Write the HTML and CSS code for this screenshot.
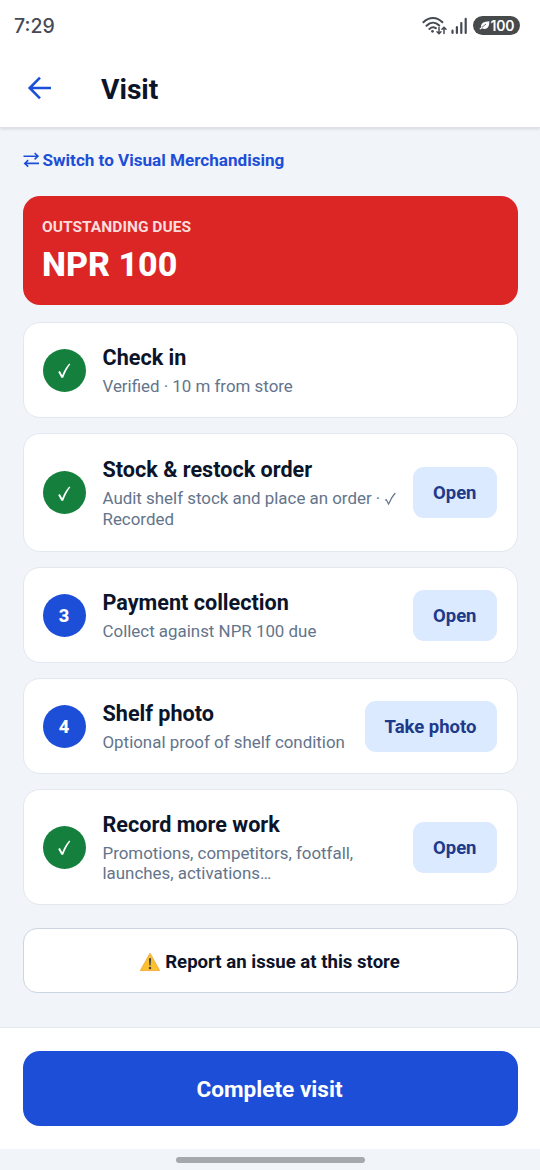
FILE: index.html
```html
<!DOCTYPE html>
<html lang="en">
<head>
<meta charset="utf-8">
<title>Visit</title>
<link rel="stylesheet" href="styles.css">
</head>
<body>
<svg class="defs" width="0" height="0">
  <symbol id="check" viewBox="0 0 14 16"><path d="M1.2 9 2.9 8.100 5.200 12.200C7 8 9.100 4.200 12.200.6L13.300 1.200C10.300 5 8.100 9.500 6.200 14.700H4.400Z" fill="currentColor"/></symbol>
</svg>
<div class="screen">
  <div class="status">
    <span class="time">7:29</span>
    <div class="status-icons">
      <svg class="wifi" width="26" height="20" viewBox="0 0 26 20" fill="none" stroke="#474a55" stroke-width="2" stroke-linecap="round">
        <path d="M1.400 6.300C7 .5 15 .5 20.400 6.300M4.500 9.800C8.500 5.800 13.500 5.800 17.200 9.500M7.400 12.900C9.500 11 12 11 13.800 12.200"/>
        <circle cx="10.500" cy="15.300" r="1.400" fill="#474a55" stroke="none"/>
        <path d="M17 11.500V17.500M15 15.700 17 17.700 19 15.700M22 17.500V11.500M20 13.300 22 11.300 24 13.300" stroke-width="1.500"/>
      </svg>
      <svg class="signal" width="17" height="18" viewBox="0 0 17 18" stroke="#474a55" stroke-width="2.200" stroke-linecap="round"><path d="M1.500 13.700V15.900M5.900 10.200V15.900M10.300 6V15.900M14.700 1.900V15.900"/></svg>
      <div class="battery">
        <svg width="11" height="9" viewBox="0 0 11 9"><path d="M10.300.3C10.500 5.500 8.500 8 5.500 8 4.500 8 3.700 7.600 3.200 7.200L1.300 8.600.4 7.800 2.300 6.200C1.300 2.500 5 .4 10.300.3Z" fill="#fff"/><path d="M3 6.300 7 3" stroke="#464a4b" stroke-width=".8"/></svg>
        <span>100</span>
      </div>
    </div>
  </div>
  <header class="header">
    <svg class="back" width="24" height="24" viewBox="0 0 24 24" fill="none" stroke="#1d4ed8" stroke-width="2.600"><path d="M24 12H3.500M13 1.700 2.700 12 13 22.300"/></svg>
    <h1>Visit</h1>
  </header>
  <main class="content">
    <a class="switch"><svg width="16" height="16" viewBox="0 0 16 16" fill="none" stroke="currentColor" stroke-width="1.600"><path d="M.5 4.200H14.800M11.600 1 15 4.200 11.600 7.400M16 11.400H2M5.200 8.200 1.800 11.400 5.200 14.600"/></svg><span>Switch to Visual Merchandising</span></a>
    <section class="dues">
      <div class="dues-label">OUTSTANDING DUES</div>
      <div class="dues-amount">NPR 100</div>
    </section>
    <section class="card">
      <div class="badge done"><svg width="14" height="16"><use href="#check"/></svg></div>
      <div class="info"><h2>Check in</h2><p>Verified · 10 m from store</p></div>
    </section>
    <section class="card stock">
      <div class="badge done"><svg width="14" height="16"><use href="#check"/></svg></div>
      <div class="info"><h2>Stock &amp; restock order</h2><p>Audit shelf stock and place an order · <svg class="mini" width="12" height="14" viewBox="0 0 12 14" fill="none" stroke="currentColor"><path d="M1 8.300 2.300 7.700 4.600 12C6.300 8 8 4.500 11.300 1" stroke-width="1.200"/></svg><br>Recorded</p></div>
      <button class="action">Open</button>
    </section>
    <section class="card">
      <div class="badge">3</div>
      <div class="info"><h2>Payment collection</h2><p>Collect against NPR 100 due</p></div>
      <button class="action">Open</button>
    </section>
    <section class="card">
      <div class="badge">4</div>
      <div class="info"><h2>Shelf photo</h2><p>Optional proof of shelf condition</p></div>
      <button class="action">Take photo</button>
    </section>
    <section class="card more">
      <div class="badge done"><svg width="14" height="16"><use href="#check"/></svg></div>
      <div class="info"><h2>Record more work</h2><p>Promotions, competitors, footfall,<br>launches, activations…</p></div>
      <button class="action">Open</button>
    </section>
    <button class="report">
      <svg width="22" height="20" viewBox="0 0 22 20"><path d="M11 1.200 20.700 18.600H1.300Z" fill="#fcc02e" stroke="#f3b04a" stroke-width="1" stroke-linejoin="round"/><path d="M9.900 6.600Q11 5.400 12.100 6.600L11.600 13.400H10.400Z" fill="#38434a"/><circle cx="11" cy="16" r="1.250" fill="#38434a"/></svg>
      <span>Report an issue at this store</span>
    </button>
  </main>
  <footer class="footer"><button class="complete">Complete visit</button></footer>
  <div class="nav"><div class="handle"></div></div>
</div>
</body>
</html>
```

FILE: styles.css
```css
* { box-sizing: border-box; margin: 0; padding: 0; }
body { font-family: Roboto, sans-serif; background: #f1f4f9; color: #0b1429; }
button { font-family: inherit; border: 0; color: inherit; white-space: nowrap; }
svg { flex: none; display: block; }
.defs { position: absolute; }
.screen { width: 540px; height: 1170px; display: flex; flex-direction: column; overflow: hidden; }
.status { height: 50px; flex: none; background: #fff; display: flex; align-items: center; justify-content: space-between; padding: 1px 20px 0 14px; z-index: 2; }
.time { font: 500 19.500px/24px Inter, sans-serif; color: #474a55; }
.status-icons { display: flex; align-items: center; }
.signal { margin: 0 5px 0 3px; }
.battery { width: 47px; height: 19px; border-radius: 10px; background: #464a4b; color: #fff; display: flex; align-items: center; justify-content: center; gap: 1px; font: 600 14px/19px Inter, sans-serif; letter-spacing: -.2px; }
.header { height: 78px; flex: none; background: #fff; display: flex; align-items: center; padding: 0 0 1px 27px; border-bottom: 1px solid #dde1e7; box-shadow: 0 1px 3px rgba(15, 23, 42, .12); z-index: 1; }
.header h1 { font-size: 28.200px; line-height: 34px; font-weight: 700; margin: 4px 0 0 50px; }
.content { flex: 1; padding: 20px 22.500px 0; display: flex; flex-direction: column; }
.switch { height: 24px; display: flex; align-items: center; gap: 4px; color: #1d4ed8; font-size: 17.100px; font-weight: 700; }
.dues { margin-top: 24px; height: 109px; flex: none; background: #dc2626; border-radius: 17px; color: #fff; padding: 21px 19.500px 0; }
.dues-label { font-size: 15.550px; line-height: 21px; font-weight: 700; color: #fbdcdc; }
.dues-amount { font-size: 34px; line-height: 40px; font-weight: 800; margin-top: 6px; }
.card { margin-top: 15px; height: 96px; flex: none; background: #fff; border: 1.400px solid #e2e8f0; border-radius: 17px; display: flex; align-items: center; padding: 0 20px 0 19px; }
.dues + .card { margin-top: 17px; }
.card.stock { height: 119px; }
.card.more { height: 116px; }
.badge { width: 43px; height: 43px; flex: none; border-radius: 50%; background: #1d4ed8; color: #fff; font-size: 18.300px; font-weight: 800; display: flex; align-items: center; justify-content: center; }
.badge.done { background: #15803d; }
.badge svg { margin-top: 2px; }
.info { flex: 1; min-width: 0; margin-left: 17px; white-space: nowrap; }
.info h2 { font-size: 21.600px; line-height: 28px; font-weight: 700; }
.info p { font-size: 16.900px; line-height: 20px; margin-top: 4px; color: #64748b; }
.stock .info h2 { line-height: 27px; }
.stock .info p { line-height: 21px; margin-top: 5px; }
.stock .info { margin-top: 1px; }
.mini { display: inline-block; vertical-align: -2px; }
.action { height: 51px; flex: none; border-radius: 11px; background: #dbeafe; color: #1e3a8a; font-size: 18.500px; font-weight: 700; padding: 1px 20px 0; }
.report { margin-top: 23px; height: 65px; flex: none; background: #fff; border: 1.400px solid #cbd5e1; border-radius: 14px; display: flex; align-items: center; justify-content: center; gap: 4px; font-size: 18.600px; font-weight: 700; padding: 2px 1px 0 0; }
.footer { height: 122px; flex: none; background: #fff; border-top: 1px solid #e2e8f0; padding: 23px 22.500px 0; }
.complete { width: 100%; height: 75px; border-radius: 17px; background: #1d4ed8; color: #fff; font-size: 22.600px; font-weight: 700; padding: 2px 1px 0 0; }
.nav { height: 21px; flex: none; display: flex; justify-content: center; padding-top: 8px; }
.handle { width: 189px; height: 5.500px; border-radius: 3px; background: #a5a8ac; }
```
